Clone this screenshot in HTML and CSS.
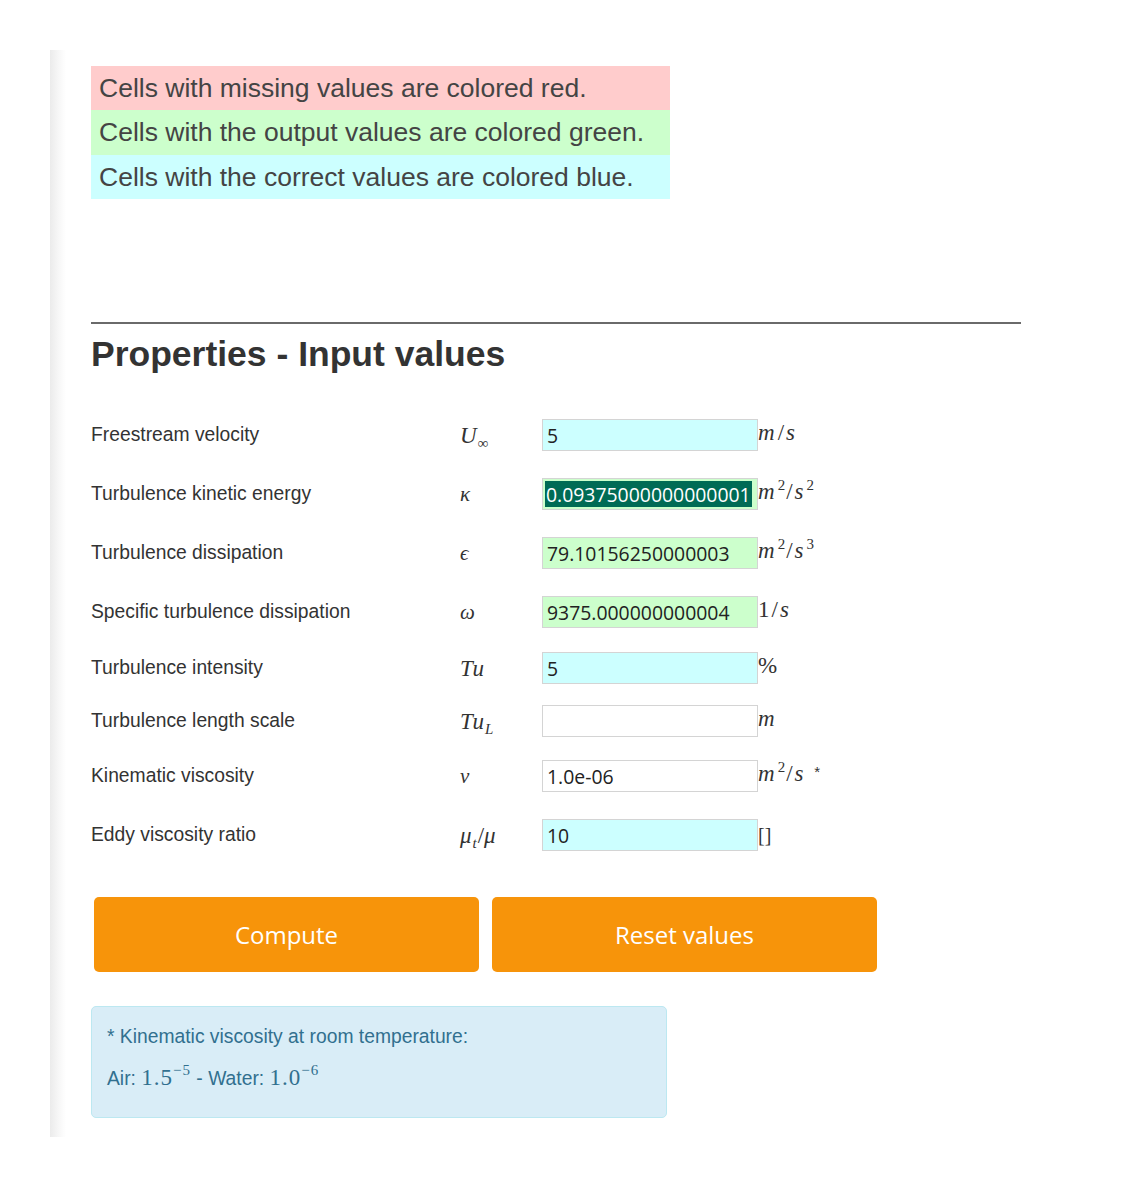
FILE: index.html
```html
<!DOCTYPE html>
<html lang="en">
<head>
<meta charset="utf-8">
<title>Turbulence properties</title>
<link rel="stylesheet" href="styles.css">
</head>
<body>
<main class="page">
  <div class="legend">
    <div class="legend-row legend-red">Cells with missing values are colored red.</div>
    <div class="legend-row legend-green">Cells with the output values are colored green.</div>
    <div class="legend-row legend-blue">Cells with the correct values are colored blue.</div>
  </div>

  <hr class="rule">
  <h2 class="title">Properties - Input values</h2>

  <div class="form">
    <div class="label">Freestream velocity</div>
    <div class="sym"><i>U</i><sub class="sub-inf">∞</sub></div>
    <div class="field field-blue">5</div>
    <div class="unit"><i>m</i>/<i>s</i></div>

    <div class="label">Turbulence kinetic energy</div>
    <div class="sym sym-small"><i>κ</i></div>
    <div class="field field-green field-selected"><span class="selection">0.09375000000000001</span></div>
    <div class="unit"><i>m</i><sup>2</sup>/<i>s</i><sup>2</sup></div>

    <div class="label">Turbulence dissipation</div>
    <div class="sym sym-small"><i>ϵ</i></div>
    <div class="field field-green">79.10156250000003</div>
    <div class="unit"><i>m</i><sup>2</sup>/<i>s</i><sup>3</sup></div>

    <div class="label">Specific turbulence dissipation</div>
    <div class="sym sym-small"><i>ω</i></div>
    <div class="field field-green">9375.000000000004</div>
    <div class="unit">1/<i>s</i></div>

    <div class="label">Turbulence intensity</div>
    <div class="sym"><i>Tu</i></div>
    <div class="field field-blue">5</div>
    <div class="unit">%</div>

    <div class="label">Turbulence length scale</div>
    <div class="sym"><i>Tu</i><sub><i>L</i></sub></div>
    <div class="field"></div>
    <div class="unit"><i>m</i></div>

    <div class="label">Kinematic viscosity</div>
    <div class="sym sym-small"><i>ν</i></div>
    <div class="field">1.0e-06</div>
    <div class="unit"><i>m</i><sup>2</sup>/<i>s</i> <span class="star">*</span></div>

    <div class="label">Eddy viscosity ratio</div>
    <div class="sym"><i>μ</i><sub><i>t</i></sub>/<i>μ</i></div>
    <div class="field field-blue">10</div>
    <div class="unit unit-plain">[]</div>
  </div>

  <div class="actions">
    <button class="btn" type="button">Compute</button>
    <button class="btn" type="button">Reset values</button>
  </div>

  <div class="note">
    <p class="note-line">* Kinematic viscosity at room temperature:</p>
    <p class="note-line">Air: <span class="num">1.5<sup>−5</sup></span> - Water: <span class="num">1.0<sup>−6</sup></span></p>
  </div>
</main>
</body>
</html>
```

FILE: styles.css
```css
html, body {
  margin: 0;
  padding: 0;
  background: #fff;
}

body {
  font-family: "Liberation Sans", Arial, sans-serif;
  color: #333;
}

.page {
  margin: 50px 0 0 50px;
  width: 971px;
  padding: 16px 0 19px 41px;
  background: linear-gradient(to right, #ebebeb 0, #f6f6f6 8px, #fff 16px);
}

.legend {
  width: 579px;
  font-size: 26.5px;
  color: #444;
}

.legend-row {
  height: 44px;
  display: flex;
  align-items: center;
  padding-left: 8px;
}

.legend-green { height: 45px; }
.legend-red { background: #ffcccc; }
.legend-green { background: #ccffcc; }
.legend-blue { background: #ccffff; }

.rule {
  margin: 123px 0 0 0;
  width: 930px;
  border: 0;
  height: 2px;
  background: #6a6a6a;
}

.title {
  margin: 13px 0 0 0;
  font-size: 35.5px;
  line-height: 35px;
  font-weight: bold;
  color: #333;
}

.form {
  margin-top: 33px;
  display: grid;
  grid-template-columns: 369px 82px 216px auto;
  grid-template-rows: 59px 59px 59px 59px 53px 53px 57px 61px;
  align-items: center;
}

.label {
  font-size: 19.3px;
  color: #333;
}

.sym, .unit {
  font-family: "Liberation Serif", "Times New Roman", serif;
  font-size: 23px;
  color: #333;
  white-space: nowrap;
}

.sym {
  padding-top: 2px;
}

.sym i, .unit i {
  font-style: italic;
  letter-spacing: 1px;
}

.unit {
  letter-spacing: 2px;
}

.unit i {
  letter-spacing: 3px;
}

.sym-small {
  font-size: 21px;
}

.sym sub {
  font-size: 15px;
  vertical-align: -5px;
  line-height: 0;
}

.sub-inf {
  font-size: 17px;
  font-style: normal;
}

.unit {
  margin-top: -4px;
}

.unit sup {
  font-size: 15px;
  vertical-align: 9px;
  line-height: 0;
  letter-spacing: 1px;
}

.unit-plain {
  margin-top: 2px;
  font-size: 20px;
  letter-spacing: 0;
}

.star {
  font-family: "Liberation Sans", sans-serif;
  font-size: 15px;
  vertical-align: 4px;
}

.field {
  box-sizing: border-box;
  height: 32px;
  border: 1px solid #d4d4d4;
  background: #fff;
  padding: 0 4px;
  display: flex;
  align-items: center;
  font-family: "Open Sans", "Noto Sans", sans-serif;
  font-size: 19.4px;
  color: #222;
  padding-top: 2px;
  white-space: nowrap;
  overflow: hidden;
}

.field-blue { background: #ccffff; }
.field-green { background: #ccffcc; }

.field-selected {
  padding: 3px 2px;
}

.selection {
  display: flex;
  align-items: center;
  height: 100%;
  padding: 2px 1px 0 1px;
  background: #006b55;
  color: #fff;
}

.actions {
  margin: 32px 0 0 3px;
  display: flex;
  gap: 13px;
}

.btn {
  width: 385px;
  height: 75px;
  border: 0;
  border-radius: 5px;
  background: #f7940a;
  color: #fff;
  font-family: "Open Sans", "Noto Sans", sans-serif;
  font-size: 24px;
  padding: 0;
}

.note {
  margin-top: 34px;
  width: 576px;
  box-sizing: border-box;
  border: 1px solid #bce8f1;
  border-radius: 5px;
  background: #d9edf7;
  color: #31708f;
  padding: 16px 15px 25px 15px;
  font-size: 19.3px;
}

.note-line {
  margin: 0;
  line-height: 27px;
}

.note-line + .note-line {
  margin-top: 14px;
}

.num {
  font-family: "Liberation Serif", "Times New Roman", serif;
  font-size: 23px;
  letter-spacing: 1px;
  color: #31708f;
}

.num sup {
  font-size: 15px;
  vertical-align: 10px;
  line-height: 0;
}
```
